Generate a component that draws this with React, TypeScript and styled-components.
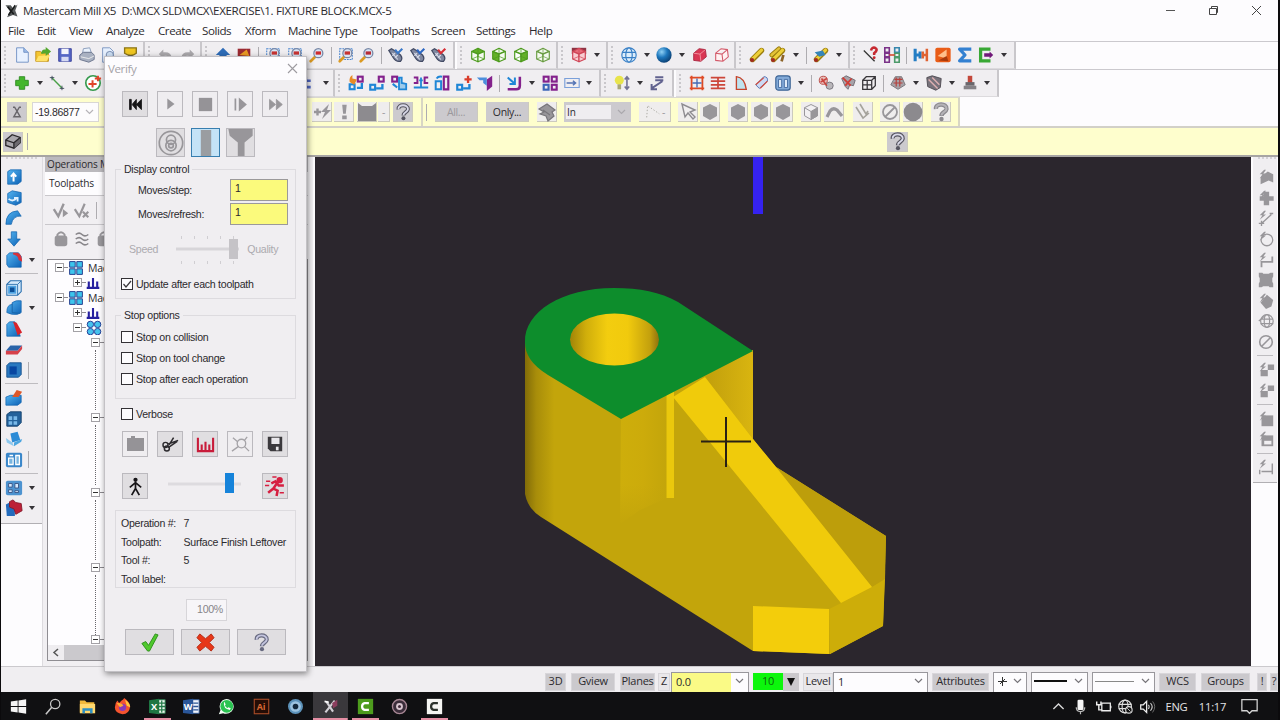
import React from 'react';
import styled, { createGlobalStyle } from 'styled-components';

const GlobalStyle = createGlobalStyle`
  * { box-sizing: border-box; }
  body {
    margin: 0;
    overflow: hidden;
    background: #fdfcfe;
    font-family: "Open Sans", "Noto Sans", sans-serif;
    color: #2c2a2e;
  }
`;

const GREY = '#98969a';
const BLUE = '#1f86d6';
const PURPLE = '#83218c';

/* ---------- glyphs, all on a 20x20 grid ---------- */

const cube = (top: string, left: string, right: string, line = '#4d9a1e') => (
  <g stroke={line} strokeWidth="1.3" strokeLinejoin="round">
    <path d="M10 2.5 17 6 10 9 3 6Z" fill={top} />
    <path d="M3 6 10 9V17.5L3 14.5Z" fill={left} />
    <path d="M17 6 10 9V17.5L17 14.5Z" fill={right} />
    <path d="M3 14.5 10 11.5 17 14.5M10 3V11" fill="none" strokeWidth=".8" />
  </g>
);

const magnifier = (inner: string, framed: boolean) => (
  <>
    {framed && <path d="M3 3H17V15H3Z" fill="none" stroke="#4b86cf" strokeWidth="1.2" strokeDasharray="2 1" />}
    <path d="m3 17 5-5" stroke="#dc9b23" strokeWidth="3" strokeLinecap="round" />
    <circle cx="11.5" cy="8" r="5" fill="#d9e6f5" stroke="#7786a5" strokeWidth="1.4" />
    <rect x="8.5" y="6" width="6" height="3.6" fill={inner} />
  </>
);

const shoe = (mark: string) => (
  <>
    <path d="M2 5 5 3 10 6 15 10Q18 14 15 17 10 18 7 13Z" fill="#8088a0" stroke="#424a63" strokeWidth="1.4" />
    <path d="m6 8 6 7M9 8l-3 3M12 10l-3 3" stroke="#d9deeb" strokeWidth="1.2" />
    <path d="m9 4 3 4 5-5" fill="none" stroke={mark} strokeWidth="2.400" />
  </>
);

const tool = (extra?: React.ReactNode) => (
  <>
    <path d="m5 15 10-10" stroke="#9a7d10" strokeWidth="6" strokeLinecap="round" />
    <path d="m5 14.500 10-10" stroke="#edcf38" strokeWidth="3.600" strokeLinecap="round" />
    <circle cx="4.500" cy="15.500" r="2.300" fill="#a12a22" />
    {extra}
  </>
);

const solid = (shape: string, accent?: React.ReactNode) => (
  <>
    <path d={shape} fill="url(#blueFill)" stroke="#1163ae" strokeWidth=".8" strokeLinejoin="round" />
    {accent}
  </>
);

const square = (x: number, y: number, color: string) => (
  <rect x={x} y={y} width="5.4" height="5.4" fill="none" stroke={color} strokeWidth="2.4" />
);

const bolt = <path d="M8 2 3 7h3l-3 5 7-6H7l3-4Z" fill={GREY} />;

const question = (color: string, edge: string) => (
  <>
    <path d="M5 7C4 1 16 1 15.5 7 15 10.5 10.5 10 10.5 14" fill="none" stroke={edge} strokeWidth="4.4" />
    <path d="M5 7C4 1 16 1 15.5 7 15 10.5 10.5 10 10.5 13.5" fill="none" stroke={color} strokeWidth="2" />
    <circle cx="10.5" cy="17" r="2.2" fill={edge} />
  </>
);

const hexagon = <path d="m10 2 7 3.500v8.500L10 18l-7-4V5.500Z" fill={GREY} />;

const glyphs: Record<string, React.ReactNode> = {
  logo: <><path d="M2 3 9 3l3 4 6-5-3 8 3 8-6-2-8 3 4-8Z" fill="#56595b" /><path d="m5 5 8 10M15 3 6 16" stroke="#17191a" strokeWidth="2" /></>,
  file: <><path d="M4 2h8l5 5v11H4Z" fill="#e8f1ff" stroke="#6e8fc3" /><path d="M12 2v5h5" fill="#9dbbe8" stroke="#6e8fc3" /></>,
  open: <><path d="M2 6h5l2 2h7v9H2Z" fill="#f4c531" stroke="#c08d19" /><path d="m5 11 13-1-4 7H2Z" fill="#ffe26a" /><path d="M8 9q0-6 5-5V1l6 5-6 5V8q-2 0-5 1Z" fill="#54a82e" /></>,
  save: <><path d="M3 3h14v14H3Z" fill="#5566c5" stroke="#3a429b" /><path d="M6 3h8v6H6Z" fill="#f3f4fc" /><path d="M6 12h8v5H6Z" fill="#d6daf3" /></>,
  print: <><path d="m6 3 7-1 2 6H5Z" fill="#eaf2fd" stroke="#8698b8" /><path d="m2 10 4-3h9l3 3v5l-6 3-10-3Z" fill="#a9b1c1" stroke="#68728a" /><path d="m3 12 9 2 6-3" fill="none" stroke="#eee" /></>,
  preview: <><path d="M4 2h8l4 4v12H4Z" fill="#e5effd" stroke="#7893be" /><circle cx="12" cy="10" r="4" fill="#cddff4" stroke="#7085a8" /></>,
  cup: <><path d="M4 2h13v6q-6 5-13 0Z" fill="#efc621" stroke="#8b751a" strokeWidth="1.500" /><path d="M8 10h5v4H8Z" fill="#6d6640" /></>,
  undo: <path d="m2 9 5-5v3q9-1 9 6-3-3-9-2v3Z" fill="#aaa8ac" />,
  redo: <path d="m18 9-5-5v3q-9-1-9 6 3-3 9-2v3Z" fill="#aaa8ac" />,
  upArrow: <path d="m10 2 8 8h-4v7H6v-7H2Z" fill="#2e6cb7" />,
  shade: <><path d="M3 3h14v14H3Z" fill="#9a2a32" /><path d="m5 10 8-6 3 7Z" fill="#e99a25" /></>,
  zoomFrame: magnifier('#c83331', true),
  zoomRed: magnifier('#d02c2c', false),
  zoomMinus: magnifier('#b82c35', false),
  shoeBlue: shoe('#3b79c9'),
  shoeTurn: shoe('#2c67c3'),
  shoeRed: shoe('#d82e35'),
  cubeTop: cube('#63b027', '#f4faef', '#f4faef'),
  cubeLeft: cube('#f4faef', '#63b027', '#f4faef'),
  cubeRight: cube('#f4faef', '#fff', '#63b027'),
  cubeNone: cube('#f4faef', '#f4faef', '#f4faef', '#6a9d43'),
  cubeRed: <><path d="M2 2h16v7H2Z" fill="#8f3444" />{cube('#e66b7a', '#f8ccd1', '#f8ccd1', '#cf4557')}</>,
  globe: <g fill="#deeefb" stroke="#3a80c6" strokeWidth="1.3"><circle cx="10" cy="10" r="8" /><ellipse cx="10" cy="10" rx="3.6" ry="8" /><path d="M3 7h14M3 13h14" /></g>,
  sphere: <circle cx="10" cy="10" r="8.500" fill="url(#sphereFill)" />,
  redSolid: <><path d="m3 8 6-5 7 1 1 8-6 5-8-1Z" fill="#d93653" stroke="#a92842" /><path d="m3 8 7 1 6-5M10 9l1 8" stroke="#f397a4" fill="none" /></>,
  redWire: <path d="m3 8 6-5 7 1 1 8-6 5-8-1ZM3 8l7 1 6-5M10 9l1 8" fill="#fff2f2" stroke="#d35a6a" strokeWidth="1.2" />,
  tool: tool(),
  tools: <><path d="m3 10 8-7" stroke="#9a7d10" strokeWidth="5" strokeLinecap="round" /><path d="m3 10 8-7" stroke="#e2c237" strokeWidth="3" strokeLinecap="round" />{tool(<path d="m14 17 2-7" stroke="#8c6327" strokeWidth="3" />)}</>,
  toolBlue: tool(<path d="m3 7 9-2 3 5-7 2Z" fill="#3585b8" />),
  askLine: <><path d="m2 5 12 12" stroke="#333" strokeWidth="1.4" /><path d="M10 5q1-4 4.500-3 4 2-1 6v2" fill="none" stroke="#c62931" strokeWidth="2.800" /><circle cx="13.500" cy="13" r="1.600" fill="#c62931" /></>,
  chain: <g fill="none" strokeWidth="1.8"><path d="M2 2h5v5H2ZM2 8h5v4H2ZM2 13h5v5H2Z" stroke="#7a3188" /><path d="M13 2h5v5h-5Z" stroke="#3787ad" /><path d="M13 8h5v4h-5ZM13 13h5v5h-5Z" stroke="#4c9a6a" /><path d="M7 10h6" stroke="#d84b30" /></g>,
  hBeam: <><path d="M3.500 3v14M3 10h6M9 6v8" stroke="#247dc4" strokeWidth="3.400" /><path d="M16.500 3v14M11 10h6M12 6v8" stroke="#e06232" strokeWidth="2.800" /></>,
  orange: <><rect x="1.500" y="2" width="17" height="16" rx="2" fill="#e95c17" /><path d="m4 11 10-7v10Z" fill="#ffc08b" /><path d="m5 16 9-5 2 6Z" fill="#a83b0d" /></>,
  sigma: <path d="M17 3.500H4l6 6.500-6 6.500h13" fill="none" stroke="#3380d1" strokeWidth="3.600" strokeLinejoin="round" />,
  bracket: <><path d="M15 3.500H4v13h11" fill="none" stroke="#39a835" strokeWidth="3.600" /><path d="M8 8h6V6l4 4-4 4v-2H8Z" fill="#711979" /></>,
  plus: <path d="M7 3h6v4h4v6h-4v4H7v-4H3V7h4Z" fill="#44b62c" stroke="#2f8b22" />,
  line: <><path d="m4 4 12 12" stroke="#4aa048" strokeWidth="1.6" /><path d="M2 4h5M4.500 2v5M13 16h5M15.500 13v5" stroke="#444c60" /></>,
  circlePlus: <><circle cx="10" cy="10" r="8" fill="#fff" stroke="#35994d" strokeWidth="1.8" /><path d="M5 11h9M9.500 7v8M12 5h7M15.500 2v6" stroke="#e0442a" strokeWidth="2.200" /></>,
  gearBlue: <path d="M5 3h4v3h4v3H9v4h4v3H5Z" fill="#4e65c3" />,
  x1: <>{square(12, 3, PURPLE)}{square(3, 11.5, BLUE)}<path d="M3 9q-1-6 3-8v4l5 1-3 6Z" fill="#e88a24" /><path d="M11 15.500h5.500V10" fill="none" stroke={BLUE} strokeWidth="2.600" /></>,
  x2: <>{square(12, 3, PURPLE)}{square(2.5, 12, BLUE)}<path d="M9 16h7v-5" fill="none" stroke={BLUE} strokeWidth="2.600" /></>,
  x3: <>{square(2.5, 3, PURPLE)}<path d="M10 4h3v6l5 1v6H10v-6Z" fill="#9ecbeb" stroke={BLUE} strokeWidth="2" /><path d="m3 11 5 4" stroke={BLUE} strokeWidth="2.400" /></>,
  x4: <><path d="M2 4h4v6H2M18 4h-4v6h4" fill="none" stroke={PURPLE} strokeWidth="2.200" /><path d="M10 4v12M2 15h16M8 7h4" stroke={BLUE} strokeWidth="2" /></>,
  x5: <><path d="M12 3h5v14h-5Z" fill="none" stroke={PURPLE} strokeWidth="2.400" /><path d="M3 8h6v9H3ZM4 5q2-3 6-2" fill="none" stroke={BLUE} strokeWidth="2.200" /></>,
  x6: <>{square(2.5, 12, BLUE)}<path d="M9 16h7v-5" fill="none" stroke={BLUE} strokeWidth="2.600" /><path d="M10.500 6h8M14.500 2v8" stroke="#d93c2b" strokeWidth="2.600" /></>,
  x7: <><path d="m12 6 6-4v12l-6 5Z" fill={PURPLE} /><path d="M1 4h11v9L8 10V7H4Z" fill="#4c8edc" /></>,
  x8: <><path d="M16.500 3v10q0 4-4 4H3" fill="none" stroke={PURPLE} strokeWidth="2.800" /><path d="m3 4 7 6m1-6v7H5" fill="none" stroke={BLUE} strokeWidth="2.200" /></>,
  x9: <>{square(3, 3, PURPLE)}{square(12, 3, PURPLE)}{square(3, 12, '#3d66b8')}{square(12, 12, PURPLE)}</>,
  x10: <><path d="M2 5h16v10H2Z" fill="none" stroke="#7ba0da" strokeWidth="1.3" /><path d="M4 10h9m-2-2.500 3 2.500-3 2.500" fill="none" stroke="#5373b4" strokeWidth="1.6" /></>,
  lamp: <><circle cx="7" cy="7" r="5" fill="#e8e44c" /><path d="M5 11.500h4V17H5Z" fill="#a9a777" /><path d="M15.500 3v13M13 6l2.500-3L18 6M13 14l2.500 3 2.500-3" fill="none" stroke="#737395" strokeWidth="1.800" /></>,
  dims: <path d="M8 3.500h9M8 7h9M16 8 4 16m0-5v6h6" fill="none" stroke="#61628f" strokeWidth="2.200" />,
  frame: <><path d="M4 4h12v12H4ZM2 4h16M2 16h16M4 2v16M16 2v16" fill="none" stroke="#de4a25" strokeWidth="2" /><path d="M10 5v10M5 10h10" stroke="#4469b4" strokeWidth="1.5" /></>,
  lines: <path d="M2 4h16M2 8h16M2 12h16M2 16h16M10 3v14" stroke="#cc463a" strokeWidth="1.9" />,
  quarter: <path d="M6 3v14h11Q15 4 6 3Z" fill="#bfe3ef" stroke="#c5452c" strokeWidth="1.5" />,
  swept: <><path d="M3 12 12 3q5 0 4 5l-9 8Z" fill="#cbd9f4" stroke="#4b6eb2" /><path d="m3 12 9-8M8 16l8-8" stroke="#d34939" strokeWidth="1.3" /></>,
  pocket: <><rect x="2" y="2" width="16" height="16" rx="3" fill="#83aad8" stroke="#3d6495" strokeWidth="1.300" /><path d="M5 6h3.500v9H5ZM11.500 6H15v9h-3.500Z" fill="#dfeaf8" stroke="#436aa0" /></>,
  gears: <><circle cx="7" cy="7" r="4.500" fill="#e7bcb8" stroke="#b5443e" /><circle cx="14" cy="13" r="4" fill="#b9b6ba" stroke="#76727a" /><path d="m5 5 6 8M4 9l7-4" stroke="#c9433e" strokeWidth="1.800" /></>,
  gears2: <><path d="m3 5 5-3 10 5-2 6-4-1-2 5-3-3Z" fill="#a7a3aa" stroke="#6d686f" /><path d="m4 4 9 9M14 5l-7 8" stroke="#cf3d36" strokeWidth="2" /></>,
  wireCube: <path d="M3 7h10v10H3ZM3 7l4-4h10v10l-4 4M13 7l4-4M8 7v10M3 12h10" fill="none" stroke="#38363a" strokeWidth="1.4" />,
  mesh: <><path d="m2 12 5-9 7 0 4 9-8 5Z" fill="#a6a2a8" stroke="#737075" /><path d="M6 6h9M5 10h10M8 4v10M12 4v10" stroke="#b6413d" strokeWidth="1.3" /></>,
  hatch: <><path d="m2 4 6-2 10 3-1 10-5 3-9-4Z" fill="#77727b" stroke="#4e4a51" /><path d="m4 6 10 10M8 4l8 8" stroke="#dcafb1" strokeWidth="1.6" /></>,
  mill: <><path d="M7.500 2h5v8h-5Z" fill="#c3473a" /><path d="M5 9h10v4H5Z" fill="#6a676c" /><path d="M3 13h14v4H3Z" fill="#858287" /></>,
  xyz: <path d="M5 4h2l3 5 3-5h2M10 9l-4 7h8l-4-7" fill="none" stroke="#68666b" strokeWidth="1.7" />,
  boltPlus: <><path d="M2 10h7M5.500 6.500v7" stroke={GREY} strokeWidth="2.400" /><path d="m17 2-8 8h4l-3 7 9-9h-4Z" fill={GREY} /></>,
  bang: <path d="M8 2h5l-1 10H9ZM8 14h5v4H8Z" fill={GREY} />,
  block: <path d="m1 1 4 3h10l4-3v18H1Z" fill="#8d8b8f" />,
  help: question('#d9d9e8', '#55545f'),
  helpGrey: question('#b5b3b7', '#8b898e'),
  helpBig: question('#c3c4de', '#686a80'),
  swirl: <path d="M2 7 10 2l8 6-3 2 2 4-6 5-2-5-6-2 4-2Z M6 8l7 5" fill={GREY} stroke="#77757a" strokeWidth="1.200" />,
  dots: <path d="m3 16 1-13 13 9" fill="none" stroke="#a5a49c" strokeDasharray="1.5 2" />,
  pointer: <path d="m4 2 3 13 3-4 5 6 2-2-5-5 5-2Z" fill="#f1eff0" stroke="#8e8c90" strokeWidth="1.4" />,
  hexa: hexagon,
  halfHex: <><path d="m10 2.500 6.500 3.200v8L10 17.500l-6.500-3.800v-8Z" fill="#f2f0f2" stroke={GREY} /><path d="m10 9.500 6.500-3.800v8L10 17.500ZM3.500 5.700 10 9.500" fill={GREY} stroke={GREY} /></>,
  bend: <path d="M3 15 6 9q3-4 7-1l5 6" fill="none" stroke={GREY} strokeWidth="3.200" />,
  check: <path d="m3 5 7 11 6-5M7 2l6 10 2-3" fill="none" stroke="#a5a39c" strokeWidth="1.6" />,
  no: <><circle cx="10" cy="10" r="7" fill="none" stroke={GREY} strokeWidth="1.8" /><path d="m5 15 10-10" stroke={GREY} strokeWidth="1.8" /></>,
  disc: <circle cx="10" cy="10" r="9.300" fill="#8c8a8e" />,
  box3d: <><path d="m2 9 7-6 9 3v6l-7 6-9-3Z" fill="#a9a7ac" stroke="#2b292c" strokeWidth="1.5" /><path d="m11 12 7-6v6l-7 6Z" fill="#6c6a6f" /><path d="m2 9 9 3 7-6M11 12v6" fill="none" stroke="#2b292c" strokeWidth="1.5" /></>,
  s1: solid('M3 4 6 2h12v13l-4 3H3Z', <path d="M9.500 15V7M6.500 9.500l3-3.500 3 3.500" fill="none" stroke="#fff" strokeWidth="2.200" />),
  s2: solid('M3 5 8 2l10 2v11l-6 3-9-3Z', <path d="M4 11q5 4 9-1m-3 0h4v4" fill="none" stroke="#e1f1ff" strokeWidth="2" />),
  s3: solid('M1 17Q1 3 14 2l4 6Q9 7 7 17Z'),
  s4: solid('M7 2h6v8h4l-7 8-7-8h4Z'),
  s5: solid('M2 5 5 2h10l3 4v12H4l-2-3Z', <path d="M9 2h5q5 2 5 10l-4-2q0-5-6-6Z" fill="#d8313a" />),
  s6: <><path d="M2 6 6 2h12v12l-4 4H2Z" fill="#d4e9fa" stroke="#2a6fae" strokeWidth="1.200" /><path d="M14 18V6H2M14 6l4-4" fill="none" stroke="#2a6fae" /><path d="M4.500 8.500h7v7h-7Z" fill="#0c4e96" stroke="#4ea3e2" strokeWidth="2" /></>,
  s7: solid('M8 4q4-3 10-2v13l-4 2q-7 1-12-2 0-9 6-9Z', <path d="M8 5v10l9 1" fill="none" stroke="#1763a7" />),
  s8: solid('M2 5 5 2h6l6 16H2Z', <path d="m9 2 4 1 6 11-5 3Z" fill="#d8232b" />),
  s9: <><path d="m1 12 5-6h13l-5 6Z" fill="#2a64a9" /><path d="M1 12h13l5-6v4l-5 6H1Z" fill="#d6414a" /></>,
  s10: <><path d="m2 5 3-3h13v13l-3 3H2Z" fill="#2a79c0" stroke="#16518d" /><path d="M5 6h8v9H5Z" fill="#0846a1" /></>,
  s11: solid('M1 9 6 7h12v8l-4 3H1Z', <path d="m8 9 5-8 6 2-4 6Z" fill="#de5729" />),
  s12: <><path d="m2 5 4-3h12v12l-4 4H2Z" fill="#24629b" stroke="#123f6b" /><path d="M4 7h4v4H4ZM9.500 7h4v4h-4ZM4 12.500h4v4H4ZM9.500 12.500h4v4h-4Z" fill="#79b9e9" /></>,
  s13: <><path d="m6 4 8-2 3 9-9 3Z" fill="#2c8bd6" /><path d="m1 9 7 5 2 4-8-4Z" fill="#8cc8ee" /><path d="m10 18 8-5 1-3-9 4Z" fill="#4ba5e0" /></>,
  s14: <><rect x="1" y="2" width="18" height="16" rx="2" fill="#3a87ca" /><path d="M4 8h5v7H4ZM12 5h4v10h-4ZM5 5h4" fill="#79b5df" stroke="#fff" strokeWidth="1.400" /></>,
  s15: <><rect x="1" y="2" width="18" height="16" rx="2" fill="#4d93d0" /><path d="M4 5h4v4H4ZM11 5h4v5h-4ZM4 12h4v3H4ZM11 13h4v2h-4Z" fill="#d6eaff" stroke="#395484" /></>,
  s16: <><path d="m1 6 4-2 6 5v10H2Z" fill="#236bbc" /><path d="M5 3 9 1l3 3 6 1 1 8-7 4-2-6-5-2Z" fill="#bd2138" stroke="#861b2d" /></>,
  r1: <>{bolt}<path d="M4 10 12 4l6 3v9l-5-2-9 4Z" fill={GREY} /></>,
  r2: <>{bolt}<path d="M7.500 3h6v5h5v5h-5v5h-6v-5H3V8h4.500Z" fill={GREY} /></>,
  r3: <>{bolt}<path d="M5 16 16 6M2 16h6M5 13v6M14 5h4" stroke={GREY} strokeWidth="1.500" /></>,
  r4: <>{bolt}<circle cx="11" cy="11" r="6.500" fill="none" stroke={GREY} strokeWidth="1.400" /></>,
  r5: <>{bolt}<path d="M5 18v-6h12V6" fill="none" stroke={GREY} strokeWidth="2" /></>,
  r6: <path d="M2 2h4l1 1h6l2-1h3v4l-1 2v4l1 2v4h-4l-1-1H7l-2 1H2v-4l1-2V8L2 6Z" fill={GREY} />,
  r7: <>{bolt}<path d="m11 3 7 6-2 7-6 3-6-7Z" fill={GREY} /></>,
  r8: <g fill="none" stroke={GREY} strokeWidth="1.300"><circle cx="11" cy="10" r="7" /><ellipse cx="11" cy="10" rx="3" ry="7" /><path d="M4 8h14M4 13h14M2 10l7-6" /></g>,
  r9: <>{bolt}<path d="M12 4h7v6h-7ZM4 10h8v7H4Z" fill={GREY} /></>,
  r10: <>{bolt}<path d="M5 6h13v12H5Z" fill={GREY} /></>,
  r11: <>{bolt}<path d="M5 6h13v12H5Z" fill={GREY} /><path d="M8 12h8v4H8Z" fill="#f1eff2" /></>,
  r12: <>{bolt}<path d="M3 18v-5M17 18V6M5 15h12" fill="none" stroke={GREY} strokeWidth="1.600" /></>,
  rewind: <path d="M3 4v12h2V4ZM11 4 6 10l5 6ZM17 4l-6 6 6 6Z" fill="#151416" stroke="#151416" />,
  play: <path d="m7 4 8 6-8 6Z" fill={GREY} />,
  stop: <path d="M3 3h14v14H3Z" fill="#959397" />,
  step: <path d="M4 3v14M9 4l7 6-7 6Z" fill={GREY} stroke={GREY} strokeWidth="2" />,
  forward: <path d="m3 4 7 6-7 6ZM11 4l7 6-7 6Z" fill={GREY} stroke={GREY} />,
  rings: <g fill="none" stroke={GREY} strokeWidth="1.300"><circle cx="10" cy="10" r="9" /><circle cx="10" cy="7.500" r="3.500" /><circle cx="10" cy="12" r="4" /><circle cx="10" cy="12" r="1.800" /></g>,
  turbo: <path d="M6 0h8v20H6Z" fill="#9a9da1" />,
  holder: <path d="M1 0h18v5l-6 5v10H8V10L2 5Z" fill={GREY} />,
  slab: <path d="M2 4h4V2h4v2h9v13H2Z" fill="#959397" />,
  scissors: <><path d="m8 10 11-4M8 14 18 7M9 11l5-8" fill="none" stroke="#2d2b2f" strokeWidth="1.700" /><g fill="none" stroke="#2d2b2f" strokeWidth="1.600"><circle cx="5" cy="11" r="2.800" /><circle cx="6.500" cy="15" r="2.800" /></g></>,
  ruler: <path d="M2 3v14h16V3M6 10v7M10 7v10M14 10v7" fill="none" stroke="#c81b3a" strokeWidth="2.200" />,
  zoomX: <g fill="none" stroke="#a5a3a7" strokeWidth="1.400"><circle cx="11" cy="9" r="4.500" /><path d="m2 3 5 4M1 17l7-5M14 12l5 5M17 2l-3 4" /></g>,
  disk: <><path d="M2 2h16v16H5l-3-3Z" fill="#3b393d" /><path d="M6 3h9v7H6Z" fill="#e9e7eb" /><path d="M11 13h3v4h-3Z" fill="#e9e7eb" /></>,
  walk: <g fill="none" stroke="#171518" strokeWidth="1.500"><circle cx="10" cy="3" r="1.500" fill="#171518" /><path d="M10 5v7l-4 7M10 12l4 7M4 11l6-5 6 5" strokeWidth="1.800" /></g>,
  run: <g fill="none" stroke="#d61f41" strokeWidth="2.400"><circle cx="14" cy="4" r="1.800" fill="#d61f41" /><path d="m12 6-4 6 4 2-1 5M8 12l-5 4M6 7l4-2 3 4h5" /><path d="M1 5h4M0 9h4M7 1h4M14 16h4" strokeWidth="1.400" /></g>,
  ok: <path d="m2 11 4-2 3 4 7-12 3 1-9 17H8Z" fill="#50c92d" stroke="#2f8f1c" />,
  cancel: <path d="m4 1 6 5 6-5 3 4-5 5 5 5-3 4-6-5-6 5-3-4 5-5-5-5Z" fill="#e73718" stroke="#b52c18" />,
  checkPlay: <><path d="m2 9 5 8 6-14" fill="none" stroke={GREY} strokeWidth="2.600" /><path d="m12 9 6 4.500-6 4.500Z" fill={GREY} /></>,
  checkX: <path d="m2 9 5 8 6-14M11 12l6 6M17 12l-6 6" fill="none" stroke={GREY} strokeWidth="2.400" />,
  lock: <><path d="M6 9V5q4-5 8 0v4" fill="none" stroke={GREY} strokeWidth="2" /><rect x="3" y="6" width="14" height="12" rx="3" fill={GREY} /></>,
  waves: <path d="M3 5q4-3 7 0t7 0M3 10q4-3 7 0t7 0M3 15q4-3 7 0t7 0" fill="none" stroke="#88868a" strokeWidth="1.700" />,
  machine: <path d="M2 2h7v7H2ZM11 2h7v7h-7ZM2 11h7v7H2ZM11 11h7v7h-7Z" fill="#3dc5ec" stroke="#263d8d" strokeWidth="1.200" />,
  bars: <path d="M4 8v8M10 3v13M16 8v8M1 17h18" stroke="#2620a0" strokeWidth="3" />,
  toolGroup: <g fill="#45c3ee" stroke="#243d97" strokeWidth="1.200"><circle cx="5.500" cy="5.500" r="4" /><circle cx="14.500" cy="5.500" r="4" /><circle cx="5.500" cy="14.500" r="4" /><circle cx="14.500" cy="14.500" r="4" /></g>,
  windows: <path d="M1 4 9 3v6.500H1ZM10 2.800 19 1.500v8h-9ZM1 10.500h8V17l-8-1ZM10 10.500h9v8l-9-1.300Z" fill="#f4f4f4" />,
  search: <><circle cx="12" cy="7" r="5.500" fill="none" stroke="#c9c9c9" strokeWidth="1.500" /><path d="m8 11-7 8" stroke="#c9c9c9" strokeWidth="1.800" /></>,
  explorer: <><path d="M1 3h6l2 2h9v12H1Z" fill="#f0b83b" /><path d="M1 7h18v11H1Z" fill="#ffd86e" /><path d="M4 18v-6h12v6h-3v-3H7v3Z" fill="#2d8fc3" /></>,
  firefox: <><path d="M9 3q2-1 3-3 7 5 7 10-1 9-9 9-9-1-9-8 0-5 3-8l2 3Z" fill="#f4542f" /><path d="M13 2q6 4 6 9l-4-2Z" fill="#ffc93b" /><circle cx="10" cy="11" r="4.300" fill="#8a3ab8" /><path d="M3 6q6-1 8 3l-4 2Z" fill="#ffad31" /></>,
  excel: <><path d="M9 2h10v16H9Z" fill="#eaf5ed" stroke="#237b4a" /><path d="M10 6h9M10 10h9M10 14h9M15 3v14" stroke="#237b4a" strokeWidth="1.500" /><path d="M0 2.500 12 1v18L0 17.500Z" fill="#1e7643" /><text x="2.300" y="14" fontSize="11" fontWeight="700" fill="#fff">X</text></>,
  word: <><path d="M9 2h10v16H9Z" fill="#eff4fc" stroke="#2c5595" /><path d="M12 6h6M12 10h6M12 14h6" stroke="#2c5595" strokeWidth="1.500" /><path d="M0 2.500 12 1v18L0 17.500Z" fill="#2a5699" /><text x=".8" y="14" fontSize="10.500" fontWeight="700" fill="#fff">W</text></>,
  whatsapp: <><path d="m1 19 2-5Q0 8 5 3q6-4 11 1 5 6 0 12-5 4-10 2Z" fill="#f2fff5" /><circle cx="10.300" cy="9.800" r="7.500" fill="#2ac351" /><path d="M7 5q-1 8 7 9l1-2-3-1-1 1-3-3 1-1-1-3Z" fill="#fff" /></>,
  ai: <><rect x="1.500" y="1.500" width="17" height="17" fill="#250d06" stroke="#a94c27" strokeWidth="1.300" /><text x="4.500" y="14" fontSize="10.500" fontWeight="700" fill="#d86834">Ai</text></>,
  eye: <><circle cx="10" cy="10" r="8.800" fill="#5d93bb" /><circle cx="10" cy="10" r="6.300" fill="#9cc3e0" /><circle cx="10" cy="10" r="3.300" fill="#13283b" /></>,
  mcam: <><path d="m5 4 8 12M15 3 4 17" stroke="#d3d0d6" strokeWidth="2.500" /><path d="m12 6 6-4v7l-5 3Z" fill="#8b3e5e" /><path d="m3 4 5 1" stroke="#fff" strokeWidth="2" /></>,
  camtasia: <><path d="M1 1h18v18H1Z" fill="#4d9c1d" /><path d="M14 6H9Q6 6.500 6 10t3 4h5" fill="none" stroke="#fff" strokeWidth="2.700" /></>,
  camWhite: <><path d="M1 1h18v18H1Z" fill="#f5f5f2" /><path d="M14 6H9Q6 6.500 6 10t3 4h5" fill="none" stroke="#2c322b" strokeWidth="2.700" /></>,
  record: <><circle cx="10" cy="10" r="8.300" fill="#3b2d3a" stroke="#a88795" strokeWidth="1.600" /><circle cx="10" cy="10" r="4" fill="#d9c6d0" /><circle cx="10" cy="10" r="1.800" fill="#412c3b" /></>,
  up: <path d="m4 13 6-6 6 6" fill="none" stroke="#d8d8d8" strokeWidth="1.600" />,
  mic: <><rect x="6.500" y="2" width="7" height="12" rx="1.500" fill="#f5f5f5" /><path d="M5 11q0 5 5 5t5-5M10 16v3" fill="none" stroke="#bbb" strokeWidth="1.400" /></>,
  battery: <><path d="M8 6h10v9H8Z" fill="none" stroke="#eee" strokeWidth="1.500" /><path d="M2 4v4h5V4M4.500 8v6h4M18.500 9v3" fill="none" stroke="#eee" strokeWidth="1.700" /></>,
  net: <><g fill="none" stroke="#ddd" strokeWidth="1.300"><circle cx="9.500" cy="10" r="7.500" /><ellipse cx="9.500" cy="10" rx="3.500" ry="7.500" /><path d="M2 7.500h15M2 12.500h15" /></g><circle cx="14" cy="14" r="3.800" fill="#111" stroke="#ddd" strokeWidth="1.300" /><path d="m12 12 4 4" stroke="#ddd" /></>,
  sound: <><path d="M2 8h3l4-4v13l-4-4H2Z" fill="none" stroke="#eee" strokeWidth="1.500" /><path d="M11 8q2 2 0 5M13.500 6q4 4 0 9" fill="none" stroke="#ccc" strokeWidth="1.300" /><path d="M16 4q5 6 0 13" fill="none" stroke="#777" /></>,
  note: <path d="M1 2h18v13h-6l-3 3-3-3H1Z" fill="none" stroke="#d3d3d3" strokeWidth="1.500" />,
};

const Svg = styled.svg`
  display: block;
  flex: none;
`;

function Icon({ name, size = 20 }: { name: string; size?: number }) {
  return <Svg width={size} height={size} viewBox="0 0 20 20">{glyphs[name]}</Svg>;
}

const Defs = () => (
  <Svg width="0" height="0">
    <defs>
      <linearGradient id="blueFill" x1="0" y1="0" x2="1" y2="1">
        <stop offset="0" stopColor="#54b4f0" /><stop offset="1" stopColor="#0d62b6" />
      </linearGradient>
      <radialGradient id="sphereFill" cx=".35" cy=".3" r=".8">
        <stop offset="0" stopColor="#8fd0f4" /><stop offset=".45" stopColor="#1d77bd" /><stop offset="1" stopColor="#0a3767" />
      </radialGradient>
    </defs>
  </Svg>
);

/* ---------- frame ---------- */

const Screen = styled.div`
  position: relative;
  width: 1280px;
  height: 720px;
  display: flex;
  flex-direction: column;
  border-left: 1px solid #0b0a0c;
  border-right: 2px solid #0b0a0c;
  overflow: hidden;
  background: #fdfcfe;
`;

const TitleBar = styled.div`
  display: flex;
  align-items: center;
  height: 21px;
  padding: 0 16px 0 3px;
  font-size: 11.6px;
  letter-spacing: -0.35px;
  white-space: pre;
`;

const TitleText = styled.span`
  flex: 1;
  margin-left: 4px;
`;

const WindowButtons = styled.div`
  display: flex;
  gap: 32px;
`;

const MenuBar = styled.div`
  display: flex;
  height: 20px;
  line-height: 20px;
  padding-left: 7px;
  font-size: 11.6px;
  letter-spacing: -0.45px;
`;

const MenuItem = styled.span<{ $w: number }>`
  width: ${(p) => p.$w}px;
  white-space: nowrap;
`;

const ToolRow = styled.div`
  display: flex;
  height: 28px;
  border-top: 1px solid #cbc9ce;
`;

const ToolGroup = styled.div<{ $w: number; $gap?: number }>`
  display: flex;
  flex: none;
  align-items: center;
  width: ${(p) => p.$w}px;
  margin-right: ${(p) => p.$gap || 0}px;
  background: #f0eef1;
  border-right: 2px solid #c9c7cb;
  border-bottom: 1px solid #dcdadd;
`;

const Grip = styled.span`
  flex: none;
  width: 11px;
  height: 18px;
  border-left: 2px dotted #c9c7cb;
  margin: 0 -4px 0 3px;
`;

const Cell = styled.span<{ $w: number }>`
  display: flex;
  flex: none;
  justify-content: center;
  align-items: center;
  width: ${(p) => p.$w}px;
`;

const Caret = styled.span`
  width: 0;
  height: 0;
  border: 3.5px solid transparent;
  border-top: 4px solid #363438;
  border-bottom: none;
`;

const Divider = styled.span`
  width: 1px;
  height: 17px;
  background: #aeacb0;
`;

const Spacer = styled.span`
  flex: 1;
`;

function Tools({ items }: { items: string }) {
  return (
    <>
      {items.split(' ').map((item, i) => {
        if (item === 'v') return <Cell key={i} $w={14}><Caret /></Cell>;
        if (item === '|') return <Cell key={i} $w={7.4}><Divider /></Cell>;
        if (item === '~') return <Spacer key={i} />;
        return <Cell key={i} $w={21.6}><Icon name={item} size={18} /></Cell>;
      })}
    </>
  );
}

type Group = { w: number; gap?: number; items: string };

const mainTools: Group[] = [
  { w: 144, items: 'file open save print preview cup' },
  { w: 57, items: 'undo redo' },
  { w: 253, gap: 2, items: 'upArrow shade | zoomFrame zoomFrame zoomRed | zoomFrame zoomMinus | shoeBlue shoeTurn shoeRed' },
  { w: 101, items: 'cubeTop cubeLeft cubeRight cubeNone' },
  { w: 50, items: 'cubeRed v' },
  { w: 128, items: 'globe v sphere v redSolid redWire' },
  { w: 114, items: 'tool tools v | toolBlue v' },
  { w: 166, items: 'askLine chain | hBeam orange sigma bracket v' },
];

const sketchTools: Group[] = [
  { w: 334, items: 'plus v line v circlePlus ~ gearBlue v' },
  { w: 266, items: 'x1 x2 x3 x4 x5 x6 x7 | x8 v x9 x10 v' },
  { w: 73, gap: 2, items: 'lamp v dims' },
  { w: 323, items: 'frame lines quarter swept pocket v | gears gears2 wireCube | mesh v hatch v mill v' },
];

const ToolGroups = ({ groups }: { groups: Group[] }) => (
  <ToolRow>
    {groups.map((g, i) => (
      <ToolGroup key={i} $w={g.w} $gap={g.gap}><Grip /><Tools items={g.items} /></ToolGroup>
    ))}
  </ToolRow>
);

/* ---------- ribbons ---------- */

const RibbonRow = styled.div`
  display: flex;
  height: 29px;
`;

const Ribbon = styled.div<{ $w: number }>`
  display: flex;
  flex: none;
  align-items: center;
  width: ${(p) => p.$w}px;
  background: #fefecd;
  border-right: 2px solid #d8d6c4;
  border-top: 1px solid #d9d7d0;
`;

const RibbonButton = styled.span<{ $ml?: number; $w?: number; $dark?: boolean }>`
  display: flex;
  flex: none;
  align-items: center;
  justify-content: center;
  width: ${(p) => p.$w || 20}px;
  height: 20px;
  margin-left: ${(p) => p.$ml || 0}px;
  background: ${(p) => (p.$dark ? '#cccace' : '#efeded')};
  border-right: 1px solid #cccabe;
  border-bottom: 1px solid #cccabe;
  font-size: 10.5px;
  letter-spacing: -0.35px;
`;

const CoordInput = styled.div`
  display: flex;
  align-items: center;
  justify-content: space-between;
  width: 67px;
  height: 20px;
  margin-left: 5px;
  padding: 0 4px 0 2px;
  background: #fdfcfd;
  border: 1px solid #d9d7d4;
  font: 10.5px "Liberation Sans", Arial, sans-serif;
  letter-spacing: -0.3px;
`;

const Muted = styled.span`
  color: #9a989c;
`;

const InSelect = styled.div`
  display: flex;
  align-items: center;
  width: 67px;
  height: 20px;
  margin-left: 7px;
  padding: 0 5px 0 2px;
  background: #cccace;
  font-size: 10px;
`;

const InValue = styled.span`
  width: 46px;
  height: 14px;
  line-height: 14px;
  padding-left: 1px;
  margin-right: 6px;
  background: #efedf0;
`;

const PromptBar = styled.div`
  display: flex;
  align-items: center;
  height: 31px;
  background: #fefecd;
  border-top: 2px solid #d2d0c8;
  border-bottom: 2px solid #a7a5a3;
`;

const Chevron = ({ color = '#77757a' }: { color?: string }) => (
  <Svg width="9" height="8" viewBox="0 0 9 8"><path d="m1 2 3.500 3.500L8 2" fill="none" stroke={color} strokeWidth="1.2" /></Svg>
);

const selectionButtons = [
  ['pointer', 7], ['hexa', 2], ['hexa', 8], ['hexa', 3], ['hexa', 2], ['halfHex', 8],
  ['bend', 3], ['check', 9], ['no', 7], ['disc', 3], ['helpGrey', 8],
] as const;

/* ---------- work area ---------- */

const Work = styled.div`
  display: flex;
  height: 509px;
`;

const SideBar = styled.div<{ $w: number; $h: number }>`
  flex: none;
  width: ${(p) => p.$w}px;
  height: ${(p) => p.$h}px;
  background: #f0eef1;
  border-bottom: 1px solid #b1afb3;
`;

const SideGrip = styled.div`
  width: 75%;
  height: 10px;
  margin-left: 5px;
  border-top: 2px dotted #d3d1d5;
`;

const SideColumn = styled.div<{ $w: number }>`
  flex: none;
  width: ${(p) => p.$w}px;
  border-right: 1px solid #dddbdf;
`;

const SideRow = styled.div`
  display: flex;
  align-items: center;
  height: 20.6px;
  padding-left: 2px;
`;

const SideRule = styled.div`
  height: 1px;
  margin: 3px 4px 3.4px;
  background: #bebcc0;
`;

const leftTools = ['s1', 's2', 's3', 's4', 's5 v', '-', 's6', 's7 v', 's8', 's9', 's10 |', '-', 's11', 's12', 's13', 's14 |', '-', 's15 v', 's16 v'];
const rightTools = ['r1', 'r2', 'r3', 'r4', 'r5', 'r6', 'r7', 'r8', 'no', '-', 'r9', 'r9', '-', 'r10', 'r11', '-', 'r12'];

const SideTools = ({ items }: { items: string[] }) => (
  <>
    <SideGrip />
    {items.map((item, i) => (item === '-' ? <SideRule key={i} /> : <SideRow key={i}><Tools items={item} /></SideRow>))}
  </>
);

const OpsPanel = styled.div`
  display: flex;
  flex-direction: column;
  flex: none;
  width: 272px;
  padding: 0 5px 5px 2px;
  background: #f1eff2;
  border-right: 2px solid #fdfcfe;
`;

const OpsHeader = styled.div`
  height: 15px;
  line-height: 14px;
  padding-left: 2px;
  background: #bbb9bd;
  font-size: 10px;
  letter-spacing: -0.15px;
`;

const OpsTab = styled.div`
  width: 57px;
  height: 23px;
  line-height: 22px;
  padding-left: 4px;
  background: #fdfcfe;
  font-size: 10.2px;
  letter-spacing: -0.25px;
`;

const OpsTools = styled.div`
  display: flex;
  align-items: center;
  height: 29px;
  padding-left: 5px;
  border-top: 1px solid #c9c7cb;
`;

const Tree = styled.div`
  flex: 1;
  display: flex;
  flex-direction: column;
  margin: 6px 0 0 2px;
  border: 1px solid #8f8d92;
  background: #fefdff;
  overflow: hidden;
`;

const TreeNode = styled.div<{ $level: number; $h?: number }>`
  display: flex;
  flex: none;
  align-items: center;
  height: ${(p) => p.$h || 15}px;
  padding-left: ${(p) => 7 + p.$level * 18}px;
  font-size: 10.5px;
  letter-spacing: -0.3px;
  overflow: hidden;
`;

const Toggle = styled.span<{ $plus?: boolean }>`
  display: flex;
  flex: none;
  align-items: center;
  justify-content: center;
  width: 9px;
  height: 9px;
  border: 1px solid #a3a1a6;
  background:
    linear-gradient(#333, #333) center / 5px 1px no-repeat,
    linear-gradient(#333, #333) center / ${(p) => (p.$plus ? '1px 5px' : '0 0')} no-repeat,
    #fff;
`;

const Branch = styled.span<{ $w?: number }>`
  width: ${(p) => p.$w || 4}px;
  border-top: 1px solid #8d8b90;
`;

const NodeLabel = styled.span`
  margin-left: 4px;
`;

const Trunk = styled.div`
  flex: none;
  height: 60px;
  margin-left: 47px;
  border-left: 1px dotted #69676c;
`;

const HScroll = styled.div`
  display: flex;
  flex: none;
  align-items: center;
  height: 15px;
  margin-top: auto;
  background: linear-gradient(to right, #efedf0 16px, #cbc9cd 16px);
  padding-left: 4px;
`;

const Viewport = styled.div`
  flex: none;
  width: 936px;
  height: 509px;
  background: #2b262d;
`;

const RightColumn = styled.div`
  flex: 1;
  display: flex;
  justify-content: center;
  padding-left: 1px;
`;

function Part() {
  return (
    <Svg width="936" height="509" viewBox="315 157 936 509">
      <defs>
        <linearGradient id="side" gradientUnits="userSpaceOnUse" x1="525" y1="0" x2="750" y2="0">
          <stop offset="0" stopColor="#826c08" /><stop offset=".05" stopColor="#a88d0a" />
          <stop offset=".13" stopColor="#c3a50b" /><stop offset="1" stopColor="#c3a50b" />
        </linearGradient>
        <linearGradient id="bore" x1="0" y1="0" x2="1" y2="0">
          <stop offset="0" stopColor="#a18408" /><stop offset=".18" stopColor="#d0ae0b" />
          <stop offset=".42" stopColor="#f3cd0f" /><stop offset=".65" stopColor="#f1ca0d" />
          <stop offset=".9" stopColor="#c3a00d" /><stop offset="1" stopColor="#8f710e" />
        </linearGradient>
        <linearGradient id="neck" x1="0" y1="0" x2="1" y2="0">
          <stop offset="0" stopColor="#ceae0b" /><stop offset=".5" stopColor="#ccab0b" /><stop offset="1" stopColor="#c3a50b" />
        </linearGradient>
        <linearGradient id="neckFade" x1="0" y1="0" x2="0" y2="1">
          <stop offset="0" stopColor="#c3a50b" stopOpacity="0" /><stop offset="1" stopColor="#c3a50b" />
        </linearGradient>
        <linearGradient id="flat" x1="0" y1="0" x2="1" y2="0">
          <stop offset="0" stopColor="#c19f0c" /><stop offset="1" stopColor="#d9b510" />
        </linearGradient>
      </defs>
      <rect x="753" y="157" width="10" height="57" fill="#3522f0" />
      <path d="M525 340V494Q528 509 541 517L753 651 830 654 883 626 886 536 776 467 753 439V350L621 380Z" fill="url(#side)" />
      <path d="M621 418 667 394V498L640 510 620 524Z" fill="url(#neck)" />
      <rect x="618" y="485" width="48.500" height="40" fill="url(#neckFade)" />
      <path d="M705 377 753 350V439Z" fill="url(#flat)" />
      <path d="M776 467 886 536 885 580 872 587Z" fill="#bd9e0b" />
      <path d="M829 609 841 603 872 587 885 579 883 626 830 654Z" fill="#cdad09" />
      <path d="M666.500 394 674 390V498H666.500Z" fill="#eac80d" />
      <path d="M673 397 705 377 753 439 776 467 872 587 841 603Z" fill="#f0cb0b" />
      <path d="M753 606 829 609V654L753 651Z" fill="#f3cd0b" />
      <path d="M525 342C524 312 562 288 614 288 640 288 660 292 678 302L753 351 621 419 548 375C531 364 525 354 525 342Z" fill="#0d8d2c" />
      <ellipse cx="614.500" cy="339.500" rx="44.500" ry="26" fill="url(#bore)" />
      <path d="M701 441.500H751M726 417V467" stroke="#282015" strokeWidth="2" />
    </Svg>
  );
}

/* ---------- status bar and taskbar ---------- */

const StatusBar = styled.div`
  display: flex;
  align-items: center;
  height: 26px;
  padding: 4px 0 0 544px;
  background: #f0eef1;
  border-top: 1px solid #cbc9cd;
  font-size: 11px;
  letter-spacing: -0.25px;
  overflow: hidden;
  white-space: nowrap;
`;

const StatusButton = styled.span<{ $w: number; $mr?: number; $plain?: boolean }>`
  display: flex;
  flex: none;
  justify-content: center;
  width: ${(p) => p.$w}px;
  height: 18px;
  line-height: 14px;
  margin-right: ${(p) => p.$mr ?? 5}px;
  background: ${(p) => (p.$plain ? '#e9e7ea' : '#cbc9cd')};
  border: 1px solid #d8d6da;
`;

const StatusField = styled.span<{ $w: number; $mr?: number; $yellow?: boolean }>`
  display: flex;
  flex: none;
  align-items: center;
  justify-content: space-between;
  width: ${(p) => p.$w}px;
  height: 20px;
  margin-right: ${(p) => p.$mr ?? 4}px;
  padding: 0 4px 2px;
  border: 1px solid #99979c;
  border-bottom: none;
  background: ${(p) => (p.$yellow ? 'linear-gradient(to right, #fafa86 59px, #fdfcfe 59px)' : '#fdfcfe')};
`;

const ColorSwatch = styled.span`
  flex: none;
  width: 30px;
  height: 17px;
  line-height: 15px;
  background: #0cf60c;
  color: #0c6a0c;
  text-align: center;
`;

const BigCaret = styled.span`
  display: flex;
  align-items: center;
  justify-content: center;
  flex: none;
  width: 16px;
  height: 18px;
  margin-right: 4px;
  background: #cbc9cd;

  &::after {
    content: "";
    border: 4.5px solid transparent;
    border-top: 8px solid #111;
    border-bottom: none;
  }
`;

const Stroke = styled.span<{ $h: number; $c: string }>`
  flex: 1;
  height: ${(p) => p.$h}px;
  margin: 0 7px 0 -2px;
  background: ${(p) => p.$c};
`;

const Taskbar = styled.div`
  display: flex;
  height: 28px;
  background: #101012;
  color: #e4e3e5;
  font-size: 11.2px;
  letter-spacing: -0.25px;
`;

const underlines: Record<string, string> = { active: '34.7px 2px', line: '27px 2px', none: '0 0' };

const TaskItem = styled.span<{ $state: string }>`
  display: flex;
  flex: none;
  align-items: center;
  justify-content: center;
  width: 34.7px;
  background:
    linear-gradient(#e48ea4, #e48ea4) bottom center / ${(p) => underlines[p.$state]} no-repeat,
    ${(p) => (p.$state === 'active' ? '#3a383c' : 'transparent')};
`;

const Tray = styled.div`
  display: flex;
  align-items: center;
  margin-left: auto;
  padding-right: 11px;
`;

const TrayText = styled.span<{ $w: number }>`
  width: ${(p) => p.$w}px;
  text-align: center;
`;

const tasks = [
  ['windows'], ['search'], ['explorer'], ['firefox'], ['excel', 'line'], ['word'], ['whatsapp'],
  ['ai'], ['eye'], ['mcam', 'active'], ['camtasia', 'line'], ['record'], ['camWhite', 'line'],
];

/* ---------- verify dialog ---------- */

const Dialog = styled.div`
  position: absolute;
  left: 103px;
  top: 56px;
  width: 203px;
  height: 616px;
  background: #f0eef1;
  border: 1px solid #c3c1c5;
  box-shadow: 1px 2px 6px rgba(0, 0, 0, 0.45);
  font: 10.6px "Liberation Sans", Arial, sans-serif;
  letter-spacing: -0.28px;
`;

const DialogTitle = styled.div`
  display: flex;
  justify-content: space-between;
  align-items: center;
  height: 23px;
  padding: 0 8px 0 3px;
  background: #fdfcfe;
  color: #a5a3a8;
  font: 11.6px "Open Sans", sans-serif;
  letter-spacing: -0.4px;
`;

const ButtonRow = styled.div<{ $mt: number; $ml?: number; $gap?: number }>`
  display: flex;
  align-items: center;
  gap: ${(p) => p.$gap ?? 9}px;
  margin: ${(p) => p.$mt}px 0 0 ${(p) => p.$ml ?? 17}px;
`;

const Push = styled.span<{ $w?: number; $h?: number; $off?: boolean; $on?: boolean }>`
  display: flex;
  flex: none;
  align-items: center;
  justify-content: center;
  width: ${(p) => p.$w || 26}px;
  height: ${(p) => p.$h || 26}px;
  border: 1px solid ${(p) => (p.$on ? '#377eaf' : '#bbb9be')};
  background: ${(p) => (p.$on ? '#c4e3f7' : p.$off ? '#efedf0' : '#e0dee1')};
`;

const Box = styled.div<{ $mt: number; $h: number; $pt?: number }>`
  width: 181px;
  height: ${(p) => p.$h}px;
  margin: ${(p) => p.$mt}px 0 0 10px;
  padding-top: ${(p) => p.$pt || 0}px;
  border: 1px solid #dddbdf;
`;

const Legend = styled.div`
  width: fit-content;
  height: 14px;
  line-height: 14px;
  margin: -8px 0 0 5px;
  padding: 0 3px;
  background: #f0eef1;
`;

const MoveRow = styled.div<{ $mt: number }>`
  display: flex;
  align-items: center;
  justify-content: space-between;
  margin: ${(p) => p.$mt}px 7px 0 22px;
`;

const MoveInput = styled.span`
  width: 58px;
  height: 22px;
  padding: 2px 4px;
  background: #fbfa7c;
  border: 1px solid #9b999a;
`;

const SpeedRow = styled.div`
  display: flex;
  align-items: center;
  height: 30px;
  margin: 9px 0 0 13px;
  color: #acaaaf;
`;

const SliderSvg = styled(Svg)`
  margin: 0 2px 0 1px;
`;

const CheckRow = styled.div<{ $mt: number; $ml?: number }>`
  display: flex;
  align-items: center;
  gap: 3px;
  height: 13px;
  margin: ${(p) => p.$mt}px 0 0 ${(p) => p.$ml ?? 5}px;
  white-space: nowrap;
`;

const CheckBox = styled.span`
  flex: none;
  width: 12px;
  height: 12px;
  border: 1px solid #333135;
  background: #fdfcfe;
`;

const InfoRow = styled.div`
  display: flex;
  height: 18.5px;
  line-height: 18px;
  padding-left: 5px;
  white-space: nowrap;
`;

const InfoLabel = styled.span`
  width: 62.5px;
`;

const Percent = styled.div`
  width: 41px;
  height: 22px;
  line-height: 18px;
  margin: 11px 0 0 81px;
  padding-right: 3px;
  border: 1px solid #d7d5d9;
  background: #f7f5f8;
  color: #868489;
  text-align: right;
`;

function Check({ label, checked, mt, ml }: { label: string; checked?: boolean; mt: number; ml?: number }) {
  return (
    <CheckRow $mt={mt} $ml={ml}>
      <CheckBox>
        {checked && <Svg width="10" height="10" viewBox="0 0 10 10"><path d="m1.500 5 2.500 3 5-6" fill="none" stroke="#3a383c" strokeWidth="1.200" /></Svg>}
      </CheckBox>
      {label}
    </CheckRow>
  );
}

function VerifyDialog() {
  return (
    <Dialog>
      <DialogTitle>
        Verify
        <Svg width="11" height="11" viewBox="0 0 11 11"><path d="m1 1 9 9M10 1l-9 9" stroke="#9d9ba0" strokeWidth="1.1" /></Svg>
      </DialogTitle>
      <ButtonRow $mt={11}>
        <Push><Icon name="rewind" size={17} /></Push>
        <Push $off><Icon name="play" size={18} /></Push>
        <Push $off><Icon name="stop" size={19} /></Push>
        <Push $off><Icon name="step" size={17} /></Push>
        <Push $off><Icon name="forward" size={17} /></Push>
      </ButtonRow>
      <ButtonRow $mt={11} $ml={51} $gap={6}>
        <Push $w={29} $h={29}><Icon name="rings" size={26} /></Push>
        <Push $w={29} $h={29} $on><Icon name="turbo" size={26} /></Push>
        <Push $w={29} $h={29}><Icon name="holder" size={27} /></Push>
      </ButtonRow>
      <Box $mt={12} $h={130}>
        <Legend>Display control</Legend>
        <MoveRow $mt={3}>Moves/step:<MoveInput>1</MoveInput></MoveRow>
        <MoveRow $mt={2}>Moves/refresh:<MoveInput>1</MoveInput></MoveRow>
        <SpeedRow>
          <span>Speed</span>
          <SliderSvg width="86" height="30" viewBox="0 0 86 30">
            <path d="M17 15H80" stroke="#d7d5d9" strokeWidth="3" />
            <path d="M22.500 2v3M35.500 2v3M48.500 2v3M61.500 2v3M74.500 2v3M22.500 27v3M35.500 27v3M48.500 27v3M61.500 27v3M74.500 27v3" stroke="#d0ced2" />
            <path d="M70 5h9v20H70Z" fill="#c5c3c7" />
          </SliderSvg>
          <span>Quality</span>
        </SpeedRow>
        <Check label="Update after each toolpath" checked mt={13} />
      </Box>
      <Box $mt={16} $h={84}>
        <Legend>Stop options</Legend>
        <Check label="Stop on collision" mt={8} />
        <Check label="Stop on tool change" mt={8} />
        <Check label="Stop after each operation" mt={8.5} />
      </Box>
      <Check label="Verbose" mt={8} ml={16} />
      <ButtonRow $mt={11}>
        <Push $off><Icon name="slab" /></Push>
        <Push><Icon name="scissors" size={18} /></Push>
        <Push><Icon name="ruler" size={19} /></Push>
        <Push $off><Icon name="zoomX" size={19} /></Push>
        <Push><Icon name="disk" size={18} /></Push>
      </ButtonRow>
      <ButtonRow $mt={16}>
        <Push><Icon name="walk" size={19} /></Push>
        <Svg width="96" height="26" viewBox="0 0 96 26">
          <path d="M11 11H84" stroke="#dddbdf" strokeWidth="3" />
          <path d="M68 0h9v20h-9Z" fill="#1683da" />
        </Svg>
        <Push><Icon name="run" size={21} /></Push>
      </ButtonRow>
      <Box $mt={11} $h={78} $pt={3}>
        <InfoRow><InfoLabel>Operation #:</InfoLabel>7</InfoRow>
        <InfoRow><InfoLabel>Toolpath:</InfoLabel>Surface Finish Leftover</InfoRow>
        <InfoRow><InfoLabel>Tool #:</InfoLabel>5</InfoRow>
        <InfoRow><InfoLabel>Tool label:</InfoLabel></InfoRow>
      </Box>
      <Percent>100%</Percent>
      <ButtonRow $mt={8} $ml={20} $gap={7}>
        <Push $w={49}><Icon name="ok" size={19} /></Push>
        <Push $w={49}><Icon name="cancel" size={19} /></Push>
        <Push $w={49}><Icon name="helpBig" size={19} /></Push>
      </ButtonRow>
    </Dialog>
  );
}

const menus: [string, number][] = [
  ['File', 29], ['Edit', 32], ['View', 37], ['Analyze', 52], ['Create', 44], ['Solids', 43],
  ['Xform', 43], ['Machine Type', 82], ['Toolpaths', 61], ['Screen', 45], ['Settings', 53], ['Help', 40],
];

export default function App() {
  return (
    <>
      <GlobalStyle />
      <Defs />
      <Screen>
        <TitleBar>
          <Icon name="logo" size={15} />
          <TitleText>Mastercam Mill X5  D:\MCX SLD\MCX\EXERCISE\1. FIXTURE BLOCK.MCX-5</TitleText>
          <WindowButtons>
            <Svg width="11" height="11"><path d="M1 5.500H10" stroke="#555" /></Svg>
            <Svg width="11" height="11"><path d="M1.500 3.500h7v6h-7ZM3.500 3V1.500h6v6H9" fill="none" stroke="#444" /></Svg>
            <Svg width="11" height="11"><path d="m1 1 9 9M10 1l-9 9" stroke="#444" /></Svg>
          </WindowButtons>
        </TitleBar>
        <MenuBar>
          {menus.map(([label, w]) => <MenuItem key={label} $w={w}>{label}</MenuItem>)}
        </MenuBar>
        <ToolGroups groups={mainTools} />
        <ToolGroups groups={sketchTools} />

        <RibbonRow>
          <Ribbon $w={422}>
            <RibbonButton $ml={6} $dark><Icon name="xyz" size={16} /></RibbonButton>
            <CoordInput>-19.86877<Chevron color="#b6b4b8" /></CoordInput>
            <Spacer />
            <RibbonButton><Icon name="boltPlus" /></RibbonButton>
            <RibbonButton $ml={2}><Icon name="bang" size={18} /></RibbonButton>
            <RibbonButton $ml={3}><Icon name="block" /></RibbonButton>
            <RibbonButton $ml={1} $w={12}><Muted>-</Muted></RibbonButton>
            <RibbonButton $ml={3} $dark><Icon name="help" size={18} /></RibbonButton>
            <Cell $w={8} />
          </Ribbon>
          <Ribbon $w={537}>
            <Cell $w={7}><Divider /></Cell>
            <RibbonButton $ml={5} $w={43} $dark><Muted>All...</Muted></RibbonButton>
            <RibbonButton $ml={8} $w={43} $dark>Only...</RibbonButton>
            <RibbonButton $ml={8}><Icon name="swirl" /></RibbonButton>
            <InSelect><InValue>In</InValue><Chevron color="#aaa8ad" /></InSelect>
            <RibbonButton $ml={8} $w={32}><Icon name="dots" size={18} /><Muted>-</Muted></RibbonButton>
            {selectionButtons.map(([name, ml], i) => (
              <RibbonButton key={i} $ml={ml}><Icon name={name} /></RibbonButton>
            ))}
          </Ribbon>
        </RibbonRow>
        <PromptBar>
          <RibbonButton $ml={2} $dark><Icon name="box3d" size={18} /></RibbonButton>
          <Cell $w={8}><Divider /></Cell>
          <RibbonButton $ml={856} $w={21} $dark><Icon name="help" size={19} /></RibbonButton>
        </PromptBar>

        <Work>
          <SideColumn $w={42}>
            <SideBar $w={41} $h={367}><SideTools items={leftTools} /></SideBar>
          </SideColumn>
          <OpsPanel>
            <OpsHeader>Operations M</OpsHeader>
            <OpsTab>Toolpaths</OpsTab>
            <OpsTools><Tools items="checkPlay checkX |" /></OpsTools>
            <OpsTools><Tools items="lock waves lock" /></OpsTools>
            <Tree>
              <TreeNode $level={0}><Toggle /><Branch /><Icon name="machine" size={16} /><NodeLabel>Mac</NodeLabel></TreeNode>
              <TreeNode $level={1}><Toggle $plus /><Branch /><Icon name="bars" size={14} /></TreeNode>
              <TreeNode $level={0}><Toggle /><Branch /><Icon name="machine" size={16} /><NodeLabel>Mac</NodeLabel></TreeNode>
              <TreeNode $level={1}><Toggle $plus /><Branch /><Icon name="bars" size={14} /></TreeNode>
              <TreeNode $level={1}><Toggle /><Branch /><Icon name="toolGroup" size={16} /></TreeNode>
              {[1, 2, 3, 4].map((n) => (
                <React.Fragment key={n}>
                  <TreeNode $level={2}><Toggle /><Branch $w={20} /></TreeNode>
                  <Trunk />
                </React.Fragment>
              ))}
              <TreeNode $level={2} $h={9}><Toggle /><Branch $w={20} /></TreeNode>
              <HScroll><Svg width="8" height="9"><path d="M6 1 2 4.500 6 8" fill="none" stroke="#555" strokeWidth="1.500" /></Svg></HScroll>
            </Tree>
          </OpsPanel>
          <Viewport><Part /></Viewport>
          <RightColumn>
            <SideBar $w={24} $h={326}><SideTools items={rightTools} /></SideBar>
          </RightColumn>
        </Work>

        <StatusBar>
          <StatusButton $w={21}>3D</StatusButton>
          <StatusButton $w={44}>Gview</StatusButton>
          <StatusButton $w={35} $mr={3}>Planes</StatusButton>
          <StatusButton $w={12} $mr={1} $plain>Z</StatusButton>
          <StatusField $w={78} $yellow>0.0<Chevron /></StatusField>
          <ColorSwatch>10</ColorSwatch>
          <BigCaret />
          <StatusButton $w={30} $mr={0} $plain>Level</StatusButton>
          <StatusField $w={95}>1<Chevron /></StatusField>
          <StatusButton $w={57} $mr={4}>Attributes</StatusButton>
          <StatusField $w={34}>
            <Svg width="9" height="9"><path d="M0 4.500h9M4.500 0v9M2 7l5-5" stroke="#333" /></Svg><Chevron />
          </StatusField>
          <StatusField $w={57}><Stroke $h={2} $c="#111" /><Chevron /></StatusField>
          <StatusField $w={63}><Stroke $h={1} $c="#888" /><Chevron /></StatusField>
          <StatusButton $w={37}>WCS</StatusButton>
          <StatusButton $w={49} $mr={7}>Groups</StatusButton>
          <StatusButton $w={10} $mr={3}>!</StatusButton>
          <StatusButton $w={8} $mr={0}>?</StatusButton>
        </StatusBar>
        <Taskbar>
          {tasks.map(([name, state = 'none']) => (
            <TaskItem key={name} $state={state}>
              <Icon name={name} size={17} />
            </TaskItem>
          ))}
          <Tray>
            {['up', 'mic', 'battery', 'net', 'sound'].map((name) => (
              <Cell key={name} $w={22.4}><Icon name={name} size={17} /></Cell>
            ))}
            <TrayText $w={35}>ENG</TrayText>
            <TrayText $w={37}>11:17</TrayText>
            <Cell $w={36}><Icon name="note" size={17} /></Cell>
          </Tray>
        </Taskbar>
        <VerifyDialog />
      </Screen>
    </>
  );
}
